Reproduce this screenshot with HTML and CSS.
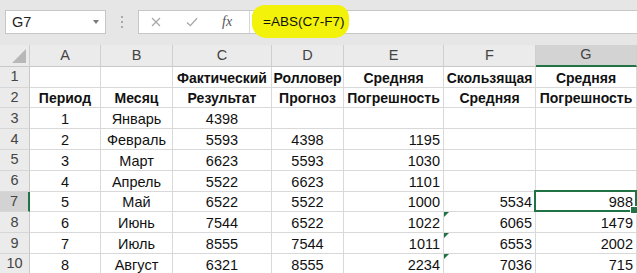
FILE: index.html
```html
<!DOCTYPE html>
<html lang="ru">
<head>
<meta charset="utf-8">
<title>Excel</title>
<link rel="stylesheet" href="styles.css">
</head>
<body>
<div class="toolbar">
  <div class="namebox"><span class="nb-text">G7</span><span class="nb-arrow"></span></div>
  <div class="grip"><i></i><i></i><i></i></div>
  <div class="fbar">
    <div class="fbtns">
      <svg class="ic-x" width="10" height="10" viewBox="0 0 10 10"><path d="M1 1L9 9M9 1L1 9" stroke="#a6a6a6" stroke-width="1.2" fill="none"/></svg>
      <svg class="ic-ok" width="12" height="10" viewBox="0 0 12 10"><path d="M1 5.5L4.3 8.6L11 1.2" stroke="#a6a6a6" stroke-width="1.3" fill="none"/></svg>
      <span class="fx">fx</span>
    </div>
    <div class="finput"><span class="hl">=ABS(C7-F7)</span></div>
  </div>
</div>
<div class="sheet">
  <div class="c hd corner"><svg width="16" height="16" viewBox="0 0 16 16"><path d="M15 1V15H1Z" fill="#b8b8b8"/></svg></div>
  <div class="c hd">A</div><div class="c hd">B</div><div class="c hd">C</div><div class="c hd">D</div><div class="c hd">E</div><div class="c hd">F</div><div class="c hd sel-col">G</div>

  <div class="c rh">1</div><div class="c"></div><div class="c"></div><div class="c b ctr">Фактический</div><div class="c b ctr">Ролловер</div><div class="c b ctr">Средняя</div><div class="c b ctr">Скользящая</div><div class="c b ctr">Средняя</div>

  <div class="c rh">2</div><div class="c b ctr">Период</div><div class="c b ctr">Месяц</div><div class="c b ctr">Результат</div><div class="c b ctr">Прогноз</div><div class="c b ctr">Погрешность</div><div class="c b ctr">Средняя</div><div class="c b ctr">Погрешность</div>

  <div class="c rh">3</div><div class="c ctr">1</div><div class="c ctr">Январь</div><div class="c ctr">4398</div><div class="c"></div><div class="c"></div><div class="c"></div><div class="c"></div>

  <div class="c rh">4</div><div class="c ctr">2</div><div class="c ctr">Февраль</div><div class="c ctr">5593</div><div class="c ctr">4398</div><div class="c rt">1195</div><div class="c"></div><div class="c"></div>

  <div class="c rh">5</div><div class="c ctr">3</div><div class="c ctr">Март</div><div class="c ctr">6623</div><div class="c ctr">5593</div><div class="c rt">1030</div><div class="c"></div><div class="c"></div>

  <div class="c rh">6</div><div class="c ctr">4</div><div class="c ctr">Апрель</div><div class="c ctr">5522</div><div class="c ctr">6623</div><div class="c rt">1101</div><div class="c"></div><div class="c"></div>

  <div class="c rh sel-row">7</div><div class="c ctr">5</div><div class="c ctr">Май</div><div class="c ctr">6522</div><div class="c ctr">5522</div><div class="c rt">1000</div><div class="c rt">5534</div><div class="c rt active">988</div>

  <div class="c rh">8</div><div class="c ctr">6</div><div class="c ctr">Июнь</div><div class="c ctr">7544</div><div class="c ctr">6522</div><div class="c rt">1022</div><div class="c rt err">6065</div><div class="c rt">1479</div>

  <div class="c rh">9</div><div class="c ctr">7</div><div class="c ctr">Июль</div><div class="c ctr">8555</div><div class="c ctr">7544</div><div class="c rt">1011</div><div class="c rt err">6553</div><div class="c rt">2002</div>

  <div class="c rh">10</div><div class="c ctr">8</div><div class="c ctr">Август</div><div class="c ctr">6321</div><div class="c ctr">8555</div><div class="c rt">2234</div><div class="c rt err">7036</div><div class="c rt">715</div>
</div>
</body>
</html>
```

FILE: styles.css
```css
* { box-sizing: border-box; margin: 0; padding: 0; }
html, body { margin: 0; background: #ffffff; }
body {
  width: 637px;
  height: 273px;
  overflow: hidden;
  font-family: "Liberation Sans", Arial, sans-serif;
  color: #111;
}

.toolbar {
  height: 45px;
  background: #e6e6e6;
  display: flex;
  align-items: flex-start;
  padding: 10px 0 0 5px;
}

.namebox {
  width: 101px;
  height: 24px;
  background: #fff;
  border: 1px solid #c6c6c6;
  display: flex;
  align-items: center;
  justify-content: space-between;
  padding: 0 6px 0 6px;
  font-size: 14.5px;
  color: #222;
}
.nb-arrow {
  width: 0;
  height: 0;
  border-left: 3.5px solid transparent;
  border-right: 3.5px solid transparent;
  border-top: 4px solid #7a7a7a;
}

.grip {
  width: 32px;
  height: 24px;
  display: flex;
  flex-direction: column;
  align-items: center;
  justify-content: center;
  gap: 3px;
}
.grip i { display: block; width: 2px; height: 2px; background: #a8a8a8; }

.fbar {
  flex: 1;
  height: 24px;
  display: flex;
  background: #fff;
  border: 1px solid #c6c6c6;
  border-right: none;
}
.fbtns {
  width: 111px;
  display: flex;
  align-items: center;
  border-right: 1px solid #d6d6d6;
}
.ic-x { margin-left: 12px; }
.ic-ok { margin-left: 25px; }
.fx {
  margin-left: 24px;
  font-family: "Liberation Serif", "Times New Roman", serif;
  font-style: italic;
  font-size: 14px;
  color: #555;
}
.finput {
  flex: 1;
  display: flex;
  align-items: center;
  padding-left: 2px;
  font-size: 13.5px;
  color: #111;
}
.hl {
  display: inline-block;
  background: #f2f20a;
  padding: 9px 5px 9px 11px;
  margin: -9px 0 -8px;
  border-radius: 13px 11px 14px 15px / 12px 13px 15px 14px;
}

.sheet {
  display: grid;
  grid-template-columns: 30px 71px 72px 99px 72px 100px 92px 101px;
  grid-template-rows: 21.8px repeat(10, 20.8px);
}

.c {
  position: relative;
  border-right: 1px solid #d9d9d9;
  border-bottom: 1px solid #d9d9d9;
  font-size: 14.5px;
  line-height: 17px;
  display: flex;
  align-items: flex-end;
  padding: 0 3px;
  white-space: nowrap;
}
.ctr { justify-content: center; }
.rt { justify-content: flex-end; }
.b { font-weight: bold; font-size: 14px; }

.hd {
  background: #ebebeb;
  border-right-color: #cfcfcf;
  border-bottom-color: #c8c8c8;
  justify-content: center;
  align-items: center;
  color: #444;
}
.corner { justify-content: flex-end; align-items: flex-end; padding: 0 2px 2px 0; }
.corner svg { display: block; }

.rh {
  background: #ebebeb;
  border-right-color: #c8c8c8;
  border-bottom-color: #d6d6d6;
  justify-content: center;
  align-items: center;
  color: #444;
  padding: 0;
}

.sel-col {
  background: #d3d3d3;
  border-bottom: 2px solid #217346;
}
.sel-row {
  background: #d3d3d3;
  border-right: 2px solid #217346;
}

.active::after {
  content: "";
  position: absolute;
  top: -2px;
  left: -2px;
  right: -1px;
  bottom: -1px;
  border: 2px solid #217346;
}
.active::before {
  content: "";
  position: absolute;
  right: -2px;
  bottom: -3px;
  width: 6px;
  height: 6px;
  background: #217346;
  border: 1px solid #fff;
  z-index: 2;
}

.err::before {
  content: "";
  position: absolute;
  top: 0;
  left: 0;
  width: 0;
  height: 0;
  border-top: 5px solid #217346;
  border-right: 5px solid transparent;
}
```
